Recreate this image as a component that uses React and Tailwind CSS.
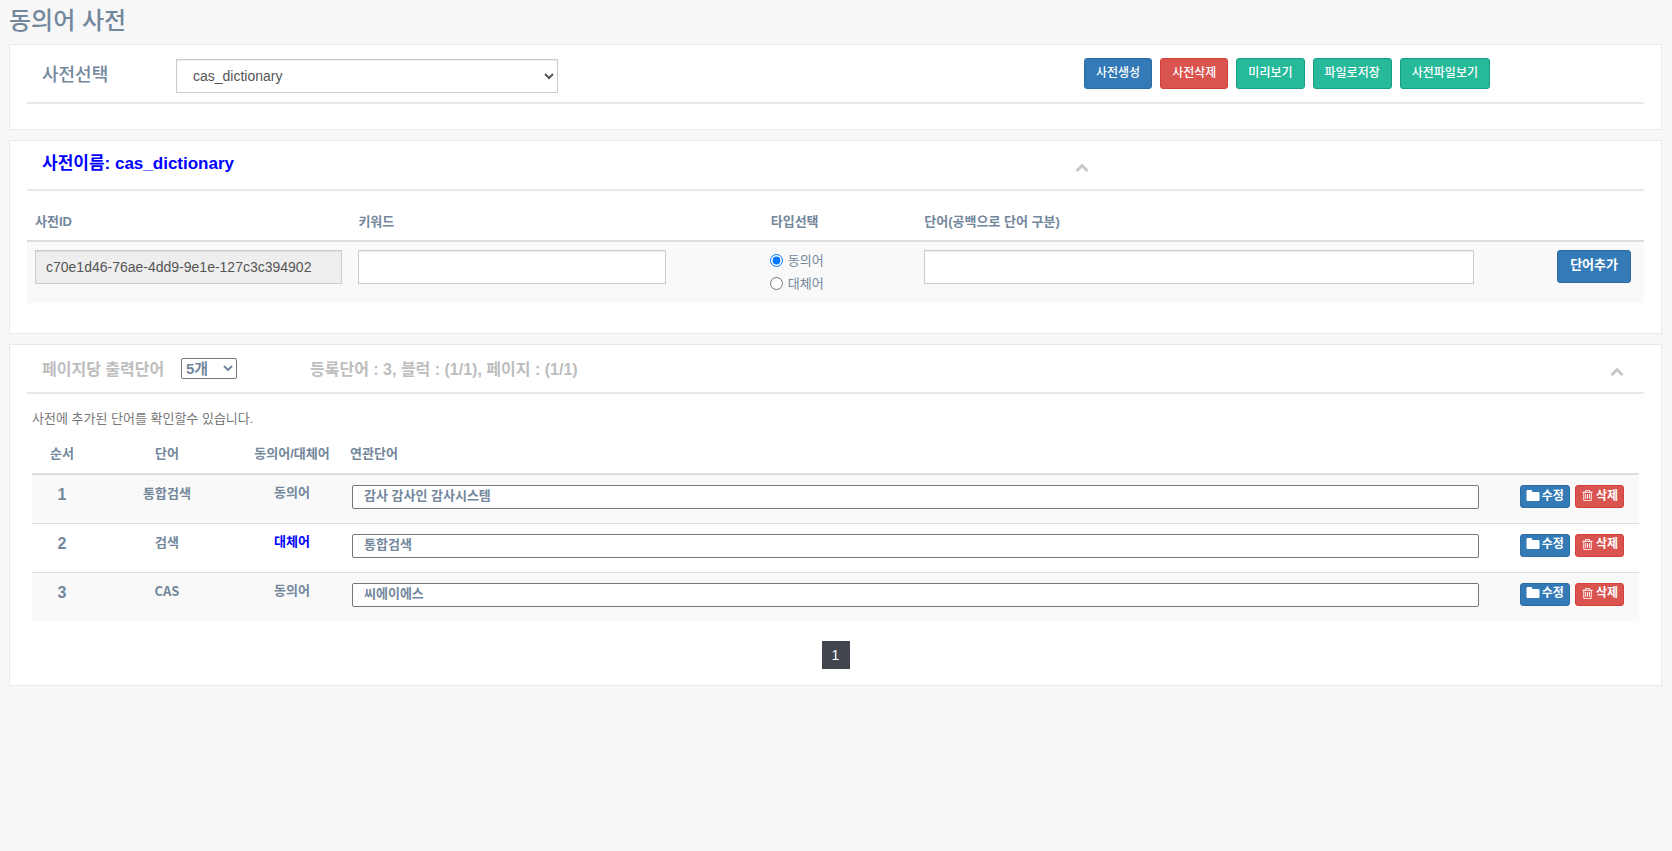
import React, { useState } from 'react';

const ICONS = {
  chevronUp: 'M1683 1331l-166 165q-19 19-45 19t-45-19l-531-531-531 531q-19 19-45 19t-45-19l-166-165q-19-19-19-45.5t19-45.5l742-741q19-19 45-19t45 19l742 741q19 19 19 45.5t-19 45.5z',
  folder: 'M1728 608v768q0 66-47 113t-113 47h-1344q-66 0-113-47t-47-113v-1088q0-66 47-113t113-47h416q66 0 113 47t47 113v96h768q66 0 113 47t47 113v64z',
  trash: 'M704 736v576q0 14-9 23t-23 9h-64q-14 0-23-9t-9-23v-576q0-14 9-23t23-9h64q14 0 23 9t9 23zm256 0v576q0 14-9 23t-23 9h-64q-14 0-23-9t-9-23v-576q0-14 9-23t23-9h64q14 0 23 9t9 23zm256 0v576q0 14-9 23t-23 9h-64q-14 0-23-9t-9-23v-576q0-14 9-23t23-9h64q14 0 23 9t9 23zm128 724v-948h-896v948q0 22 7 40.5t14.5 27 10.5 8.5h832q3 0 10.5-8.5t14.5-27 7-40.5zm-672-1076h448l-48-117q-7-9-17-11h-317q-10 2-17 11zm928 32v64q0 14-9 23t-23 9h-96v948q0 83-47 143.5t-113 60.5h-832q-66 0-113-58.5t-47-141.5v-952h-96q-14 0-23-9t-9-23v-64q0-14 9-23t23-9h309l70-167q15-37 54-63t79-26h320q40 0 79 26t54 63l70 167h309q14 0 23 9t9 23z',
};

const BUTTON_COLORS = {
  primary: 'bg-[#337ab7] border-[#2e6da4]',
  danger: 'bg-[#d9534f] border-[#d43f3a]',
  success: 'bg-[#26b99a] border-[#169f85]',
};

const toolbarButtons = [
  { label: '사전생성', color: 'primary' },
  { label: '사전삭제', color: 'danger' },
  { label: '미리보기', color: 'success' },
  { label: '파일로저장', color: 'success' },
  { label: '사전파일보기', color: 'success' },
];

const words = [
  { id: 1, word: '통합검색', type: '동의어', related: '감사 감사인 감사시스템' },
  { id: 2, word: '검색', type: '대체어', related: '통합검색' },
  { id: 3, word: 'CAS', type: '동의어', related: '씨에이에스' },
];

const fieldClass = 'block w-full h-[34px] border border-[#ccc] px-[10px] text-sm text-[#555] shadow-[inset_0_1px_1px_rgba(0,0,0,0.075)]';

const Icon = ({ name, className }) => (
  <svg viewBox="0 0 1792 1792" fill="currentColor" aria-hidden="true" className={className}>
    <path d={ICONS[name]} />
  </svg>
);

const Panel = ({ children, className }) => (
  <section className={`bg-white border border-[#e6e9ed] px-[17px] ${className}`}>{children}</section>
);

const CollapseButton = ({ label }) => (
  <button type="button" aria-label={label} className="pt-1 text-[#c5c7cb]">
    <Icon name="chevronUp" className="block w-[14px] h-[14px]" />
  </button>
);

const App = () => {
  const [dictionary, setDictionary] = useState('cas_dictionary');
  const [keyword, setKeyword] = useState('');
  const [wordType, setWordType] = useState('동의어');
  const [newWords, setNewWords] = useState('');
  const [pageSize, setPageSize] = useState('5');

  return (
    <div className="min-h-screen bg-[#f7f7f7] pl-[9px] pr-[10px] text-[13px] text-[#73879c] font-['Liberation_Sans','Noto_Sans_CJK_KR',sans-serif]">
      <h1 className="h-11 pt-[3px] text-2xl leading-9 font-medium">동의어 사전</h1>

      <div className="flex flex-col gap-[10px]">
        {/* Dictionary select */}
        <Panel className="h-[86px]">
          <div className="grid grid-cols-[149px_382fr_526fr_560fr] items-start h-[59px] pt-[13px] border-b-2 border-[#e6e9ed]">
            <label htmlFor="dictionary" className="pl-[15px] text-lg leading-[34px] font-medium">사전선택</label>
            <select
              id="dictionary"
              value={dictionary}
              onChange={(e) => setDictionary(e.target.value)}
              className="mt-px h-[34px] border border-[#ccc] bg-white px-3 text-sm text-[#555] shadow-[inset_0_1px_1px_rgba(0,0,0,0.075)]"
            >
              <option value="cas_dictionary">cas_dictionary</option>
            </select>
            <div className="col-start-4 flex gap-2">
              {toolbarButtons.map((button) => (
                <button
                  key={button.label}
                  type="button"
                  className={`h-[31px] px-[11px] pb-px rounded-[3px] border text-xs font-medium text-white whitespace-nowrap ${BUTTON_COLORS[button.color]}`}
                >
                  {button.label}
                </button>
              ))}
            </div>
          </div>
        </Panel>

        {/* Add word form */}
        <Panel className="h-[194px]">
          <div className="flex items-center h-[50px] border-b-2 border-[#e6e9ed]">
            <div className="flex items-center justify-between w-2/3 pl-[15px] pr-4">
              <h2 className="pb-[2px] text-[17px] leading-6 font-bold text-[#00f]">사전이름: {dictionary}</h2>
              <CollapseButton label="사전이름 접기" />
            </div>
          </div>
          <table className="w-full mt-[13px] table-fixed">
            <colgroup>
              <col className="w-[20%]" />
              <col className="w-[25.5%]" />
              <col className="w-[9.5%]" />
              <col className="w-[35%]" />
              <col className="w-[10%]" />
            </colgroup>
            <thead>
              <tr className="h-[37px] border-b-2 border-[#ddd] text-left">
                <th className="px-2 font-bold">사전ID</th>
                <th className="px-2 font-bold">키워드</th>
                <th className="px-2 font-bold">타입선택</th>
                <th className="px-2 font-bold">단어(공백으로 단어 구분)</th>
                <th></th>
              </tr>
            </thead>
            <tbody>
              <tr className="h-[62px] bg-[#f9f9f9] align-top">
                <td className="px-2 pt-2">
                  <input type="text" aria-label="사전ID" readOnly value="c70e1d46-76ae-4dd9-9e1e-127c3c394902" className={`${fieldClass} bg-[#eee]`} />
                </td>
                <td className="pl-2 pr-[97px] pt-2">
                  <input type="text" aria-label="키워드" value={keyword} onChange={(e) => setKeyword(e.target.value)} className={`${fieldClass} bg-white`} />
                </td>
                <td className="pl-[7px] pt-[7px]">
                  {['동의어', '대체어'].map((type) => (
                    <label key={type} className="flex items-center gap-[5px] h-[23px]">
                      <input type="radio" name="wordType" checked={wordType === type} onChange={() => setWordType(type)} className="w-[13px] h-[13px]" />
                      {type}
                    </label>
                  ))}
                </td>
                <td className="px-2 pt-2">
                  <input type="text" aria-label="단어" value={newWords} onChange={(e) => setNewWords(e.target.value)} className={`${fieldClass} bg-white`} />
                </td>
                <td className="pr-[13px] pt-2 text-right">
                  <button type="button" className={`h-[33px] px-3 pb-1 rounded-[3px] border font-bold text-white ${BUTTON_COLORS.primary}`}>
                    단어추가
                  </button>
                </td>
              </tr>
            </tbody>
          </table>
        </Panel>

        {/* Registered words */}
        <Panel className="h-[342px]">
          <div className="flex items-center h-[49px] pl-[15px] pr-5 border-b-2 border-[#e6e9ed] text-base font-bold text-[#bdbdbd]">
            <label htmlFor="pageSize" className="w-[139px] pt-[2px]">페이지당 출력단어</label>
            <select
              id="pageSize"
              value={pageSize}
              onChange={(e) => setPageSize(e.target.value)}
              className="w-14 h-[21px] rounded-[2px] border border-[#767676] bg-white text-[15px] leading-4 font-bold text-[#73879c]"
            >
              <option value="5">5개</option>
              <option value="10">10개</option>
              <option value="20">20개</option>
            </select>
            <p className="flex-1 pt-[2px] ml-[73px]">등록단어 : 3, 블럭 : (1/1), 페이지 : (1/1)</p>
            <CollapseButton label="단어목록 접기" />
          </div>
          <div className="px-[5px]">
            <p className="pt-[15px] leading-5 text-[#777]">사전에 추가된 단어를 확인할수 있습니다.</p>
            <table className="w-full mt-[6px] table-fixed font-bold">
              <colgroup>
                <col className="w-[60px]" />
                <col className="w-[150px]" />
                <col className="w-[100px]" />
                <col />
                <col className="w-[152px]" />
              </colgroup>
              <thead>
                <tr className="h-[39px] border-b-2 border-[#ddd]">
                  <th>순서</th>
                  <th>단어</th>
                  <th className="whitespace-nowrap">동의어/대체어</th>
                  <th className="px-2 text-left">연관단어</th>
                  <th></th>
                </tr>
              </thead>
              <tbody>
                {words.map((item) => (
                  <tr key={item.id} className="h-[49px] border-b border-[#ddd] last:border-b-0 odd:bg-[#f9f9f9] align-top text-center">
                    <td className="pt-2 text-base">{item.id}</td>
                    <td className="pt-2 font-['Noto_Sans_CJK_KR',sans-serif]">{item.word}</td>
                    <td className={`pt-2 ${item.type === '대체어' ? 'text-[#00f]' : ''}`}>{item.type}</td>
                    <td className="pl-[10px] pr-2 pt-[10px]">
                      <input
                        type="text"
                        aria-label={`${item.word} 연관단어`}
                        defaultValue={item.related}
                        className="block w-full h-6 px-[11px] pb-[5px] leading-4 rounded-[2px] border border-[#767676] bg-white"
                      />
                    </td>
                    <td className="pr-[15px] pt-[10px]">
                      <div className="flex justify-end gap-[5px]">
                        <button type="button" className={`flex items-center gap-[2px] h-[23px] px-[5px] pb-[2px] rounded-[3px] border text-xs text-white ${BUTTON_COLORS.primary}`}>
                          <Icon name="folder" className="w-[14px] h-[14px]" />
                          수정
                        </button>
                        <button type="button" className={`flex items-center gap-[2px] h-[23px] px-[5px] pb-[2px] rounded-[3px] border text-xs text-white ${BUTTON_COLORS.danger}`}>
                          <Icon name="trash" className="w-[13px] h-[13px]" />
                          삭제
                        </button>
                      </div>
                    </td>
                  </tr>
                ))}
              </tbody>
            </table>
            <nav aria-label="페이지" className="flex justify-center mt-5">
              <a href="#1" aria-current="page" className="w-7 h-7 bg-[#42454e] text-center text-sm leading-7 text-white">1</a>
            </nav>
          </div>
        </Panel>
      </div>
    </div>
  );
};

export default App;
